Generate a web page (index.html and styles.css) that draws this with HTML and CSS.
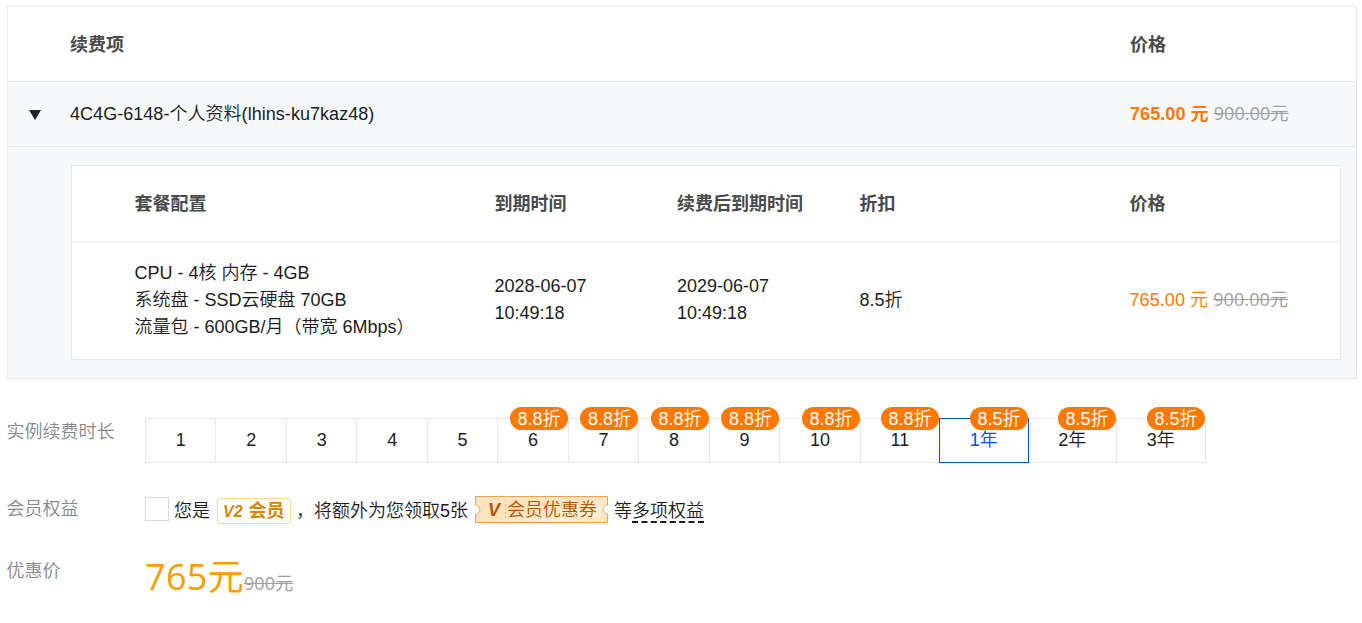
FILE: index.html
```html
<!DOCTYPE html>
<html lang="zh-CN">
<head>
<meta charset="utf-8">
<title>续费</title>
<link rel="stylesheet" href="styles.css">
</head>
<body>
<main class="page">
  <section class="table">
    <div class="row head">
      <span></span><span>续费项</span><span>价格</span>
    </div>
    <div class="row item">
      <svg class="arrow" width="12" height="10" viewBox="0 0 12 10"><path d="M0 0H12L6 10Z" fill="#222"/></svg>
      <span class="name">4C4G-6148-个人资料(lhins-ku7kaz48)</span>
      <span><b class="price">765.00 元</b> <s class="old">900.00元</s></span>
    </div>
    <div class="detail">
      <div class="inner">
        <div class="inner-row inner-head">
          <span>套餐配置</span><span>到期时间</span><span>续费后到期时间</span><span>折扣</span><span>价格</span>
        </div>
        <div class="inner-row inner-body">
          <span>CPU - 4核 内存 - 4GB<br>系统盘 - SSD云硬盘 70GB<br>流量包 - 600GB/月（带宽 6Mbps）</span>
          <span>2028-06-07<br>10:49:18</span>
          <span>2029-06-07<br>10:49:18</span>
          <span>8.5折</span>
          <span><span class="price">765.00 元</span> <s class="old">900.00元</s></span>
        </div>
      </div>
    </div>
  </section>

  <section class="field duration">
    <div class="label">实例续费时长</div>
    <div class="segments">
      <div class="seg">1</div>
      <div class="seg">2</div>
      <div class="seg">3</div>
      <div class="seg">4</div>
      <div class="seg">5</div>
      <div class="seg">6<span class="badge">8.8折</span></div>
      <div class="seg">7<span class="badge">8.8折</span></div>
      <div class="seg">8<span class="badge">8.8折</span></div>
      <div class="seg">9<span class="badge">8.8折</span></div>
      <div class="seg">10<span class="badge">8.8折</span></div>
      <div class="seg">11<span class="badge">8.8折</span></div>
      <div class="seg active">1年<span class="badge">8.5折</span></div>
      <div class="seg">2年<span class="badge">8.5折</span></div>
      <div class="seg">3年<span class="badge">8.5折</span></div>
    </div>
  </section>

  <section class="field member">
    <div class="label">会员权益</div>
    <div class="benefit">
      <span class="checkbox"></span>
      <span class="you">您是</span>
      <span class="level"><i>V2</i>会员</span>
      <span class="extra">，将额外为您领取5张</span>
      <span class="coupon">
        <svg class="coupon-bg" width="133" height="27" viewBox="0 0 133 27">
          <defs><linearGradient id="gold" x1="0" y1="0" x2="1" y2="1"><stop offset="0" stop-color="#ffe5bd"/><stop offset=".5" stop-color="#ffe3bc"/><stop offset=".72" stop-color="#fff0dc"/><stop offset="1" stop-color="#ffe0b0"/></linearGradient></defs>
          <path d="M.5 .5H132.5V9A4.5 4.5 0 0 0 132.500 18V26.500H.5V18A4.500 4.500 0 0 0 .5 9Z" fill="url(#gold)" stroke="#eba44e"/>
          <path d="M30.500 4V23" stroke="#f5c078" stroke-dasharray="2 2"/>
        </svg>
        <i>V</i><span class="coupon-text">会员优惠券</span>
      </span>
      <span class="more">等<u>多项权益</u></span>
    </div>
  </section>

  <section class="field total">
    <div class="label">优惠价</div>
    <div class="sum"><span class="big">765元</span><s class="old">900元</s></div>
  </section>
</main>
</body>
</html>
```
FILE: styles.css
```css
* { box-sizing: border-box; }
body {
  margin: 0;
  background: #fff;
  color: #1c1c1c;
  font: 350 18px/27px "Liberation Sans", "Noto Sans CJK SC", sans-serif;
  white-space: nowrap;
}
.page { padding: 6px 5px 0 7px; }
.table { width: 1350px; border: 1px solid #e5e8ee; background: #f6f8fc; }
.row {
  display: grid;
  grid-template-columns: 62px 1060px 1fr;
  align-items: center;
  border-bottom: 1px solid #e5e8ee;
}
.head { height: 75px; padding-top: 2px; background: #fff; color: #4a4a4a; font-weight: 700; }
.item { height: 65px; }
.name { letter-spacing: .04px; }
.arrow { margin: 2px 0 0 21px; }
.price { color: #ff7800; letter-spacing: .07px; }
b.price { font-weight: 700; }
.old {
  color: #a0a0a0;
  font-family: "Open Sans", "Noto Sans CJK SC", sans-serif;
  font-weight: 400;
  letter-spacing: .1px;
}
.detail { padding: 18px 15px 18px 63px; }
.inner { height: 195px; border: 1px solid #e5e8ee; background: #fff; }
.inner-row {
  display: grid;
  grid-template-columns: 360px 182.500px 182.500px 270px 1fr;
  align-items: center;
  padding-left: 62.500px;
}
.inner-head { height: 76px; border-bottom: 1px solid #e5e8ee; color: #4a4a4a; font-weight: 700; }
.inner-head span { padding-top: 1px; }
.inner-body { height: 116px; }

.field { display: flex; }
.label { width: 138px; color: #888; text-indent: -.5px; }
.duration { padding-top: 39px; }
.duration .label { padding-top: 1px; }
.segments { display: flex; height: 45px; }
.seg {
  position: relative;
  display: flex;
  justify-content: center;
  width: 70.480px;
  padding-top: 8px;
  border: 1px solid #e5e8ee;
  border-right: 0;
}
.seg:nth-child(10) { width: 80.600px; }
.seg:nth-child(11) { width: 79px; }
.seg:nth-child(12) { width: 90px; }
.seg:nth-child(13) { width: 87px; border-left: 0; }
.seg:last-child { width: 90px; border-right: 1px solid #e5e8ee; }
.seg.active { border: 1px solid #0052d9; color: #0052d9; }
.badge {
  position: absolute;
  top: -12px;
  right: -.2px;
  width: 58px;
  height: 23px;
  border-radius: 12px;
  background: #ff7800;
  color: #fff;
  line-height: 24px;
  text-align: center;
}

.member { padding-top: 32px; }
.member .label { padding-top: 1px; }
.benefit { display: flex; align-items: flex-start; }
.checkbox { width: 24px; height: 24px; margin-top: 2px; border: 1px solid #d3d8e2; }
.you { margin: 3px 0 0 5px; }
.level {
  display: flex;
  gap: 6px;
  width: 74px;
  height: 26px;
  margin: 3px 0 0 7px;
  padding-left: 5px;
  border: 1px solid #ffd591;
  border-radius: 3px;
  color: #d48806;
  font-weight: 700;
  line-height: 25px;
}
.level i { font-size: 16px; }
.extra { margin: 3px 0 0 5px; }
.coupon { position: relative; width: 133px; height: 27px; margin: 1px 0 0 7px; padding-left: 13px; color: #b55404; line-height: 28px; }
.coupon-bg { position: absolute; left: 0; top: 0; }
.coupon i { position: relative; display: inline-block; width: 19px; font-weight: 700; }
.coupon-text { position: relative; }
.more { margin: 3px 0 0 6px; }
.more u { display: inline-block; height: 25px; border-bottom: 2px dashed #1c1c1c; text-decoration: none; }

.total { padding-top: 28px; }
.total .label { padding-top: 5px; }
.sum { display: flex; align-items: baseline; height: 48px; line-height: 48px; }
.big { color: #ff9d00; font: 400 36px/48px "Open Sans", "Noto Sans CJK SC", sans-serif; letter-spacing: .3px; }
```
